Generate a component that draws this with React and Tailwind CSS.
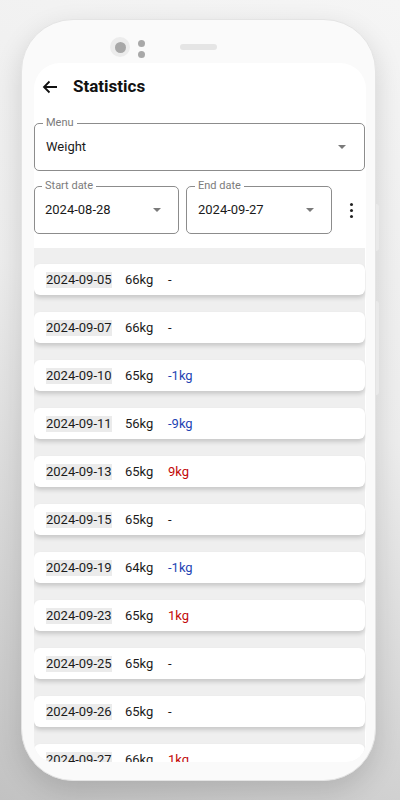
const rows = [
    { date: "2024-09-05", weight: "66kg", diff: "-" },
    { date: "2024-09-07", weight: "66kg", diff: "-" },
    { date: "2024-09-10", weight: "65kg", diff: "-1kg" },
    { date: "2024-09-11", weight: "56kg", diff: "-9kg" },
    { date: "2024-09-13", weight: "65kg", diff: "9kg" },
    { date: "2024-09-15", weight: "65kg", diff: "-" },
    { date: "2024-09-19", weight: "64kg", diff: "-1kg" },
    { date: "2024-09-23", weight: "65kg", diff: "1kg" },
    { date: "2024-09-25", weight: "65kg", diff: "-" },
    { date: "2024-09-26", weight: "65kg", diff: "-" },
    { date: "2024-09-27", weight: "66kg", diff: "1kg" },
];

const Caret = () => (
    <svg width="8" height="4" viewBox="0 0 8 4">
        <path d="M0 0 L8 0 L4 4 Z" fill="#7a7a7a" />
    </svg>
);

const Field = ({ label, value, className, labelLeft = "left-[8px]", padLeft = "pl-[11px]", padRight = "pr-[17px]" }) => (
    <div className={`relative h-[48px] border border-[#8c8c8c] rounded-[5px] flex items-center justify-between ${padLeft} ${padRight} ${className}`}>
        <span className={`absolute -top-[8px] ${labelLeft} bg-white px-[3px] text-[11px] leading-[14px] text-[#7b7b7b]`}>
            {label}
        </span>
        <span className="text-[13px] text-[#1b1b1b]">{value}</span>
        <Caret />
    </div>
);

const diffColor = (d) => {
    if (d === "-") return "text-[#1b1b1b]";
    if (d.startsWith("-")) return "text-[#1f45b3]";
    return "text-[#c20a0a]";
};

export default function App() {
    return (
        <div
            className="w-[400px] h-[800px] overflow-hidden pt-[19px] pl-[21px] bg-[linear-gradient(205deg,#f5f5f5_0%,#ededed_45%,#c2c2c2_100%)]"
            style={{ fontFamily: "Roboto, 'Liberation Sans', sans-serif" }}
        >
            <div className="relative w-[355px] h-[762px] rounded-[52px] bg-[#fafafa] border border-[#e4e4e4] shadow-[0_10px_28px_rgba(0,0,0,0.14)] flex flex-col">
                <div className="absolute -right-[4px] top-[184px] w-[3px] h-[47px] rounded-r bg-[#e9e9e9]" />
                <div className="absolute -right-[4px] top-[281px] w-[3px] h-[94px] rounded-r bg-[#e9e9e9]" />

                {/* camera + speaker */}
                <div className="h-[43px] pt-[17px] pl-[88px] flex items-start">
                    <div className="w-[20px] h-[20px] rounded-full bg-[#ececec] flex items-center justify-center">
                        <div className="w-[11px] h-[11px] rounded-full bg-[#a8a8a8]" />
                    </div>
                    <div className="ml-[8px] mt-[3px] flex flex-col gap-[4px]">
                        <div className="w-[7px] h-[7px] rounded-full bg-[#a8a8a8]" />
                        <div className="w-[7px] h-[7px] rounded-full bg-[#a8a8a8]" />
                    </div>
                    <div className="ml-[35px] mt-[7px] w-[37px] h-[6px] rounded-full bg-[#e5e5e5]" />
                </div>

                {/* screen */}
                <div className="ml-[12px] w-[332px] h-[699px] bg-white rounded-t-[26px] rounded-b-[20px] overflow-hidden flex flex-col">
                    <div className="h-[48px] shrink-0 flex items-center pl-[8px]">
                        <svg width="16" height="14" viewBox="0 0 16 14" fill="none" stroke="#111" strokeWidth="1.8">
                            <path d="M15 7 H2 M7.5 1.5 L2 7 L7.5 12.5" />
                        </svg>
                        <span className="ml-[15px] text-[17px] font-bold text-[#111]">Statistics</span>
                    </div>

                    <Field label="Menu" value="Weight" className="mt-[12px] w-[331px] shrink-0" padRight="pr-[18px]" />

                    <div className="mt-[15px] flex items-center shrink-0">
                        <Field label="Start date" value="2024-08-28" className="w-[145px]" labelLeft="left-[7px]" padLeft="pl-[10px]" />
                        <Field label="End date" value="2024-09-27" className="ml-[7px] w-[146px]" />
                        <div className="ml-[18px] flex flex-col gap-[3px]">
                            <div className="w-[3px] h-[3px] rounded-full bg-[#222]" />
                            <div className="w-[3px] h-[3px] rounded-full bg-[#222]" />
                            <div className="w-[3px] h-[3px] rounded-full bg-[#222]" />
                        </div>
                    </div>

                    <div className="mt-[14px] flex-1 bg-[#efefef] pt-[16px] flex flex-col gap-[17px] w-[331px]">
                        {rows.map((r) => (
                            <div
                                key={r.date}
                                className="h-[31px] shrink-0 bg-white rounded-[6px] shadow-[0_3px_4px_rgba(0,0,0,0.16)] flex items-center pl-[12px] text-[13px] text-[#1b1b1b]"
                            >
                                <span className="w-[79px]">
                                    <span className="bg-[#ebebeb] leading-[16px] inline-block">{r.date}</span>
                                </span>
                                <span className="w-[43px]">{r.weight}</span>
                                <span className={diffColor(r.diff)}>{r.diff}</span>
                            </div>
                        ))}
                    </div>
                </div>
            </div>
        </div>
    );
}
